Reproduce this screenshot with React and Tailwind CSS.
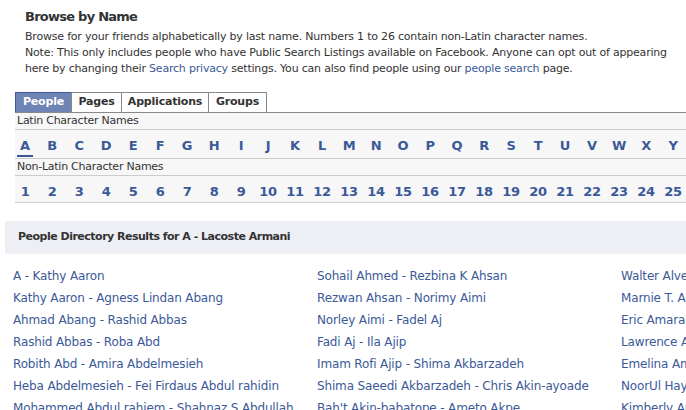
import React from 'react';

const latin = 'ABCDEFGHIJKLMNOPQRSTUVWXYZ'.split('');
const numbers = Array.from({ length: 26 }, (_, i) => String(i + 1));

const tabs = [
    { label: 'People', w: 'w-[57px]', active: true },
    { label: 'Pages', w: 'w-[51px]' },
    { label: 'Applications', w: 'w-[88px]' },
    { label: 'Groups', w: 'w-[59px]' },
];

const columns = [
    [
        'A - Kathy Aaron',
        'Kathy Aaron - Agness Lindan Abang',
        'Ahmad Abang - Rashid Abbas',
        'Rashid Abbas - Roba Abd',
        'Robith Abd - Amira Abdelmesieh',
        'Heba Abdelmesieh - Fei Firdaus Abdul rahidin',
        'Mohammed Abdul rahiem - Shahnaz S Abdullah',
    ],
    [
        'Sohail Ahmed - Rezbina K Ahsan',
        'Rezwan Ahsan - Norimy Aimi',
        'Norley Aimi - Fadel Aj',
        'Fadi Aj - Ila Ajip',
        'Imam Rofi Ajip - Shima Akbarzadeh',
        'Shima Saeedi Akbarzadeh - Chris Akin-ayoade',
        "Bah't Akin-babatope - Ameto Akpe",
    ],
    [
        'Walter Alves - Marnie T. Amado',
        'Marnie T. Amado - Eric Amaral',
        'Eric Amaral - Lawrence Ambrose',
        'Lawrence Ambrose - Emelina Amor',
        'Emelina Amor - NoorUl Hayat Amin',
        'NoorUl Hayat Amin - Kimberly Amos',
        'Kimberly Amos - Lacoste Armani',
    ],
];

const IndexRow = ({ items, h, pad, selected }) => (
    <div className={`flex gap-[7px] ${h} ${pad} border-b border-[#cccccc]`}>
        {items.map((item) => (
            <a
                key={item}
                className="relative w-[20px] shrink-0 flex items-center justify-center text-[13px] font-bold text-[#3b5998] tracking-[-0.3px]"
            >
                {item}
                {item === selected && (
                    <span className="absolute bottom-[1px] left-[2px] w-[16px] h-[2px] bg-[#3b5998]"></span>
                )}
            </a>
        ))}
    </div>
);

export default function App() {
    return (
        <div className="w-[686px] h-[410px] overflow-hidden bg-white text-[#333333] font-['DejaVu_Sans',sans-serif]">
            <div className="pt-[9px] pl-[25px] whitespace-nowrap">
                <h2 className="text-[13px] leading-[16px] font-bold tracking-[-0.75px]">Browse by Name</h2>
                <p className="mt-[4px] text-[11px] leading-[16px] tracking-[-0.2px]">
                    Browse for your friends alphabetically by last name. Numbers 1 to 26 contain non-Latin character names.
                    <br />
                    Note: This only includes people who have Public Search Listings available on Facebook. Anyone can opt out of appearing
                    <br />
                    here by changing their <a className="text-[#3b5998]">Search privacy</a> settings. You can also find people using our{' '}
                    <a className="text-[#3b5998]">people search</a> page.
                </p>
            </div>

            <div className="mt-[15px] ml-[15px] flex border-b border-[#898989]">
                {tabs.map((t) => (
                    <div
                        key={t.label}
                        className={`${t.w} h-[20px] -mr-px flex items-center justify-center text-[11px] font-bold tracking-[-0.2px] border border-b-0 ${
                            t.active ? 'bg-[#6d84b4] border-[#3b5998] text-white' : 'bg-white border-[#898989] text-[#333333]'
                        }`}
                    >
                        {t.label}
                    </div>
                ))}
            </div>

            <div className="ml-[15px] bg-[#f7f7f7]">
                <div className="h-[17px] pl-[2px] flex items-center text-[11px] tracking-[-0.25px] border-b border-[#cccccc]">
                    Latin Character Names
                </div>
                <IndexRow items={latin} h="h-[29px]" pad="pt-[3px]" selected="A" />
                <div className="h-[17px] pl-[2px] flex items-center text-[11px] tracking-[-0.25px] border-b border-[#cccccc]">
                    Non-Latin Character Names
                </div>
                <IndexRow items={numbers} h="h-[27px]" pad="pt-[5px]" />
            </div>

            <div className="mt-[18px] ml-[5px] h-[33px] pl-[13px] flex items-center bg-[#edeff4] text-[11px] font-bold tracking-[-0.5px]">
                People Directory Results for A - Lacoste Armani
            </div>

            <div className="mt-[11px] ml-[13px] flex">
                {columns.map((col, i) => (
                    <ul key={i} className="w-[304px] shrink-0">
                        {col.map((name) => (
                            <li key={name} className="leading-[22px] text-[12px] text-[#3b5998] whitespace-nowrap tracking-[-0.15px]">
                                <a>{name}</a>
                            </li>
                        ))}
                    </ul>
                ))}
            </div>
        </div>
    );
}
